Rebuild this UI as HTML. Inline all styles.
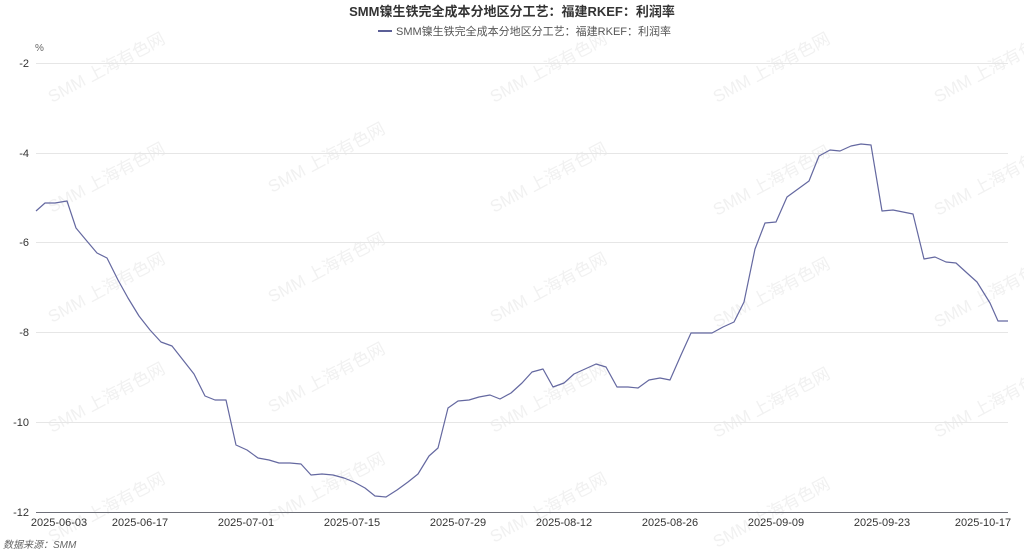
<!DOCTYPE html>
<html><head><meta charset="utf-8"><style>
body{margin:0;background:#fff;width:1024px;height:554px;overflow:hidden;font-family:"Liberation Sans","Noto Sans CJK SC",sans-serif;}
</style></head><body>
<svg width="1024" height="554" xmlns="http://www.w3.org/2000/svg" style="position:absolute;left:0;top:0" font-family="Liberation Sans, Noto Sans CJK SC, sans-serif">
<g fill="#f1f1f1" font-size="17">
<text transform="translate(52,103) rotate(-28)">SMM 上海有色网</text>
<text transform="translate(272,193) rotate(-28)">SMM 上海有色网</text>
<text transform="translate(494,103) rotate(-28)">SMM 上海有色网</text>
<text transform="translate(717,103) rotate(-28)">SMM 上海有色网</text>
<text transform="translate(938,103) rotate(-28)">SMM 上海有色网</text>
<text transform="translate(52,213) rotate(-28)">SMM 上海有色网</text>
<text transform="translate(494,213) rotate(-28)">SMM 上海有色网</text>
<text transform="translate(717,216) rotate(-28)">SMM 上海有色网</text>
<text transform="translate(938,216) rotate(-28)">SMM 上海有色网</text>
<text transform="translate(52,323) rotate(-28)">SMM 上海有色网</text>
<text transform="translate(272,303) rotate(-28)">SMM 上海有色网</text>
<text transform="translate(494,323) rotate(-28)">SMM 上海有色网</text>
<text transform="translate(717,328) rotate(-28)">SMM 上海有色网</text>
<text transform="translate(938,328) rotate(-28)">SMM 上海有色网</text>
<text transform="translate(52,433) rotate(-28)">SMM 上海有色网</text>
<text transform="translate(272,413) rotate(-28)">SMM 上海有色网</text>
<text transform="translate(494,433) rotate(-28)">SMM 上海有色网</text>
<text transform="translate(717,438) rotate(-28)">SMM 上海有色网</text>
<text transform="translate(938,438) rotate(-28)">SMM 上海有色网</text>
<text transform="translate(52,543) rotate(-28)">SMM 上海有色网</text>
<text transform="translate(272,523) rotate(-28)">SMM 上海有色网</text>
<text transform="translate(494,543) rotate(-28)">SMM 上海有色网</text>
<text transform="translate(717,548) rotate(-28)">SMM 上海有色网</text>
</g>
<text x="512" y="16" text-anchor="middle" font-size="13" font-weight="bold" fill="#333">SMM镍生铁完全成本分地区分工艺：福建RKEF：利润率</text>
<line x1="378" y1="31" x2="392" y2="31" stroke="#5b5f97" stroke-width="2"/>
<text x="396" y="35" font-size="11" fill="#555">SMM镍生铁完全成本分地区分工艺：福建RKEF：利润率</text>
<text x="35" y="51" font-size="10" fill="#666">%</text>
<g stroke="#e6e6e6" stroke-width="1">
<line x1="36" y1="63.5" x2="1008" y2="63.5"/>
<line x1="36" y1="153.5" x2="1008" y2="153.5"/>
<line x1="36" y1="242.5" x2="1008" y2="242.5"/>
<line x1="36" y1="332.5" x2="1008" y2="332.5"/>
<line x1="36" y1="422.5" x2="1008" y2="422.5"/>
</g>
<line x1="36" y1="512.5" x2="1008" y2="512.5" stroke="#6e7079" stroke-width="1"/>
<g font-size="11" fill="#333" text-anchor="end">
<text x="29" y="67">-2</text><text x="29" y="157">-4</text><text x="29" y="246">-6</text>
<text x="29" y="336">-8</text><text x="29" y="426">-10</text><text x="29" y="516">-12</text>
</g>
<g font-size="11" fill="#333" text-anchor="middle">
<text x="59" y="526">2025-06-03</text><text x="140" y="526">2025-06-17</text><text x="246" y="526">2025-07-01</text>
<text x="352" y="526">2025-07-15</text><text x="458" y="526">2025-07-29</text><text x="564" y="526">2025-08-12</text>
<text x="670" y="526">2025-08-26</text><text x="776" y="526">2025-09-09</text><text x="882" y="526">2025-09-23</text>
<text x="983" y="526">2025-10-17</text>
</g>
<text x="3" y="548" font-size="10" font-style="italic" fill="#666">数据来源：SMM</text>
<polyline fill="none" stroke="#6468a0" stroke-width="1.2" stroke-linejoin="round" points="36,211 45,203 55,203 67,201 76,228 86,240 97,253 107,258 118,280 128,298 139,316 150,330 161,342 172,346 183,360 194,374 205,396 215,400 226,400 236,445 247,450 258,458 269,460 279,463 290,463 301,464 311,475 322,474 333,475 344,478 354,482 365,488 375,496 386,497 397,490 408,482 418,474 429,456 438,448 448,408 458,401 469,400 479,397 490,395 500,399 511,393 522,383 532,372 543,369 553,387 564,383 574,374 585,369 596,364 606,367 617,387 628,387 638,388 649,380 660,378 670,380 681,355 691,333 702,333 712,333 723,327 734,322 744,302 755,249 765,223 776,222 787,197 798,189 809,181 819,156 830,150 840,151 851,146 861,144 871,145 882,211 893,210 903,212 913,214 924,259 935,257 946,262 956,263 967,273 977,282 990,303 998,321 1008,321"/>
</svg>
</body></html>
